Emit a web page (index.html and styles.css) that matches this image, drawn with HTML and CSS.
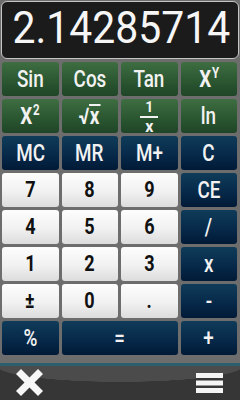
FILE: index.html
```html
<!DOCTYPE html>
<html>
<head>
<meta charset="utf-8">
<link rel="stylesheet" href="styles.css">
</head>
<body>
<div class="screen">
  <div class="display"><span class="value">2.14285714</span></div>
  <div class="keypad">
    <div class="key green"><span class="lbl">Sin</span></div>
    <div class="key green"><span class="lbl">Cos</span></div>
    <div class="key green"><span class="lbl">Tan</span></div>
    <div class="key green"><span class="lbl bold">X<sup class="sup">Y</sup></span></div>

    <div class="key green"><span class="lbl bold">X<sup class="sup">2</sup></span></div>
    <div class="key green"><span class="lbl bold">√<span class="over">x</span></span></div>
    <div class="key green"><span class="frac"><span class="num">1</span><span class="den">x</span></span></div>
    <div class="key green"><span class="lbl">ln</span></div>

    <div class="key blue"><span class="lbl">MC</span></div>
    <div class="key blue"><span class="lbl">MR</span></div>
    <div class="key blue"><span class="lbl">M+</span></div>
    <div class="key blue"><span class="lbl">C</span></div>

    <div class="key white"><span class="lbl">7</span></div>
    <div class="key white"><span class="lbl">8</span></div>
    <div class="key white"><span class="lbl">9</span></div>
    <div class="key blue"><span class="lbl">CE</span></div>

    <div class="key white"><span class="lbl">4</span></div>
    <div class="key white"><span class="lbl">5</span></div>
    <div class="key white"><span class="lbl">6</span></div>
    <div class="key blue"><span class="lbl">/</span></div>

    <div class="key white"><span class="lbl">1</span></div>
    <div class="key white"><span class="lbl">2</span></div>
    <div class="key white"><span class="lbl">3</span></div>
    <div class="key blue"><span class="lbl">x</span></div>

    <div class="key white"><span class="lbl">±</span></div>
    <div class="key white"><span class="lbl">0</span></div>
    <div class="key white"><span class="lbl">.</span></div>
    <div class="key blue"><span class="lbl">-</span></div>

    <div class="key blue"><span class="lbl">%</span></div>
    <div class="key blue wide"><span class="lbl">=</span></div>
    <div class="key blue"><span class="lbl">+</span></div>
  </div>
  <div class="footer">
    <svg class="icon-close" width="27" height="27" viewBox="0 0 27 27">
      <line x1="2.5" y1="2.5" x2="24.5" y2="24.5" stroke="#f7f7f7" stroke-width="7"/>
      <line x1="24.5" y1="2.5" x2="2.5" y2="24.5" stroke="#f7f7f7" stroke-width="7"/>
    </svg>
    <svg class="icon-menu" width="27" height="20" viewBox="0 0 27 20">
      <rect x="0" y="0" width="27" height="5" fill="#f4f4f4"/>
      <rect x="0" y="7.5" width="27" height="5" fill="#f4f4f4"/>
      <rect x="0" y="15" width="27" height="5" fill="#f4f4f4"/>
    </svg>
  </div>
</div>
</body>
</html>
```
FILE: styles.css
```css
* { box-sizing: border-box; margin: 0; padding: 0; }
html, body { width: 240px; height: 400px; overflow: hidden; }
body {
  background: #6d6d6d;
  font-family: Roboto, "Liberation Sans", sans-serif;
}
.screen { display: flex; flex-direction: column; height: 400px; }

.display {
  margin: 1px 1px 0;
  height: 58px;
  background: #1b1b1b;
  border: 1px solid #c4c4c4;
  border-radius: 6px;
  display: flex;
  align-items: center;
  justify-content: flex-end;
  padding: 0 8px 4px 0;
}
.value {
  display: inline-block;
  color: #f6f6f6;
  font-size: 44px;
  line-height: 1;
  transform: scaleX(0.93);
  transform-origin: right center;
}

.keypad {
  margin-top: 3px;
  padding: 0 3px 0 2px;
  display: grid;
  grid-template-columns: repeat(4, 1fr);
  grid-template-rows: repeat(8, 34px);
  gap: 3px;
}
.key {
  border-radius: 3px;
  display: flex;
  align-items: center;
  justify-content: center;
  font-size: 23px;
  font-weight: 500;
  line-height: 1;
}
.wide { grid-column: span 2; }
.green {
  background: linear-gradient(#3f6e42, #2b5731 55%, #1f4527);
  color: #f2f2f2;
}
.blue {
  background: linear-gradient(#0f3c59, #07294a 55%, #001a36);
  color: #f2f2f2;
}
.white {
  background: linear-gradient(#fdfdfd, #f1f1f1 55%, #dcdcdc);
  color: #111;
  font-weight: 700;
  font-size: 22px;
}
.lbl {
  display: inline-block;
  transform: scaleX(0.82);
}
.bold { font-weight: 700; }
.sup {
  font-size: 14px;
  vertical-align: top;
  position: relative;
  top: -2px;
  margin-left: 1px;
}
.over {
  border-top: 2px solid #f2f2f2;
  padding: 0 1px;
  line-height: 0.95;
  display: inline-block;
}
.frac {
  display: inline-flex;
  flex-direction: column;
  align-items: center;
  font-weight: 700;
  font-size: 14px;
  line-height: 1;
  margin-top: 2px;
}
.frac .num { padding: 0 5px 2px; border-bottom: 2px solid #f2f2f2; }
.frac .den { font-size: 16px; padding-top: 1px; }

.footer {
  margin-top: 8px;
  flex: 1;
  border-top: 3px solid #2c5e6d;
  background: radial-gradient(ellipse 124px 16px at 50% 0, #4b4b4b 98%, #363636 100%);
  display: flex;
  justify-content: space-between;
  align-items: flex-start;
  padding: 3px 17px 0 16px;
}
.icon-menu { margin-top: 4px; }
```
